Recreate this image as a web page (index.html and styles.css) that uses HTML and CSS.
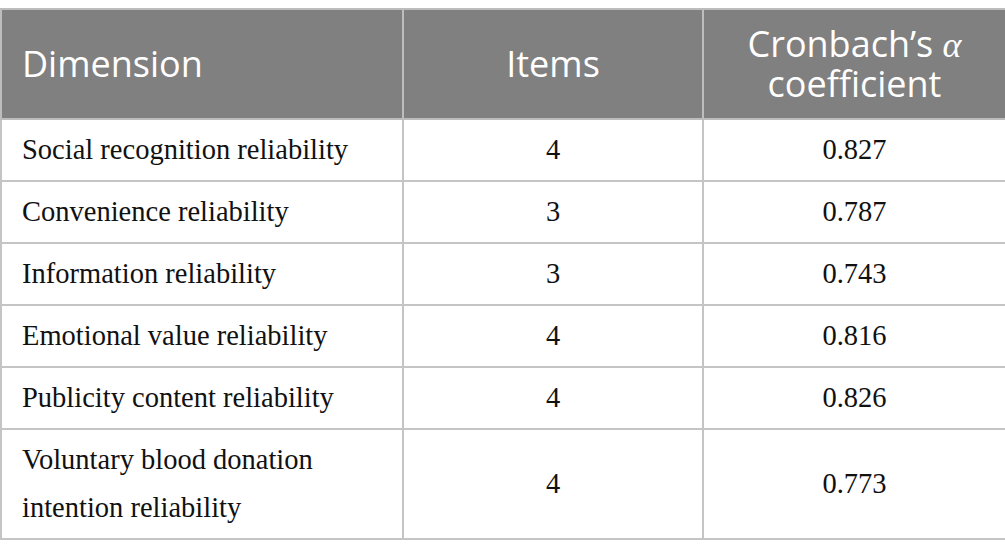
FILE: index.html
```html
<!DOCTYPE html>
<html>
<head>
<meta charset="utf-8">
<link rel="stylesheet" href="styles.css">
</head>
<body>
<div class="wrap">
<table class="rel">
<colgroup><col class="c1"><col class="c2"><col class="c3"></colgroup>
<thead>
<tr><th class="left">Dimension</th><th>Items</th><th><span class="hl">Cronbach’s <span class="alpha">α</span></span><span class="hl">coefficient</span></th></tr>
</thead>
<tbody>
<tr><td class="left">Social recognition reliability</td><td>4</td><td>0.827</td></tr>
<tr><td class="left">Convenience reliability</td><td>3</td><td>0.787</td></tr>
<tr><td class="left">Information reliability</td><td>3</td><td>0.743</td></tr>
<tr><td class="left">Emotional value reliability</td><td>4</td><td>0.816</td></tr>
<tr><td class="left">Publicity content reliability</td><td>4</td><td>0.826</td></tr>
<tr><td class="left">Voluntary blood donation<br>intention reliability</td><td>4</td><td>0.773</td></tr>
</tbody>
</table>
</div>
</body>
</html>
```
FILE: styles.css
```css
html, body { margin: 0; padding: 0; background: #fff; }
.wrap { padding-top: 8px; }
.rel {
  width: 1005px;
  border-collapse: collapse;
  table-layout: fixed;
}
.c1 { width: 402px; }
.c2 { width: 300px; }
.c3 { width: 303px; }
.rel th {
  background: #808080;
  color: #fff;
  font-family: "Open Sans", sans-serif;
  font-weight: 400;
  font-size: 36px;
  line-height: 40px;
  height: 80px;
  padding: 14px 20px;
  text-align: center;
  border: 2px solid #bdbdbd;
}
.rel th.left { text-align: left; }
.hl { display: block; height: 40px; line-height: 40px; }
.alpha { font-family: "Liberation Serif", serif; font-style: italic; line-height: 1; }
.rel td {
  font-family: "Liberation Serif", serif;
  font-size: 28.5px;
  line-height: 48px;
  color: #111;
  padding: 6px 20px;
  text-align: center;
  border: 2px solid #c4c4c4;
}
.rel td.left { text-align: left; }
```
